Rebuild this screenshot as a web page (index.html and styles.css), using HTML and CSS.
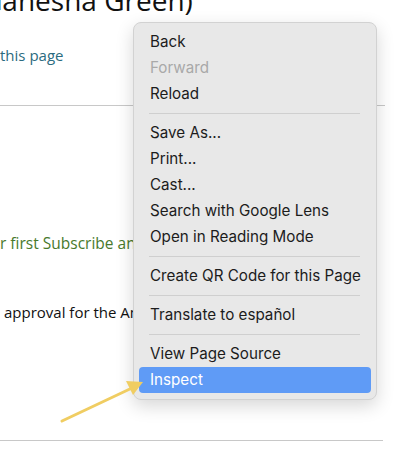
FILE: index.html
```html
<!DOCTYPE html>
<html lang="en">

<head>
    <meta charset="UTF-8">
    <meta name="viewport" content="width=device-width, initial-scale=1.0">
    <title>Inspect</title>
    <link rel="stylesheet" href="styles.css">
</head>

<body>

    <!-- Page content behind the menu -->
    <div class="page">
        <h1 class="title">Ganesha Green)</h1>
        <a class="page-link" href="#">this page</a>
        <hr class="rule">
        <p class="promo">r first Subscribe and Save order</p>
        <p class="note">approval for the Amazon listing</p>
        <hr class="rule rule-bottom">
    </div>

    <!-- Right click menu -->
    <ul class="context-menu">
        <li class="item">Back</li>
        <li class="item disabled">Forward</li>
        <li class="item">Reload</li>
        <li class="sep"></li>
        <li class="item">Save As...</li>
        <li class="item">Print...</li>
        <li class="item">Cast...</li>
        <li class="item">Search with Google Lens</li>
        <li class="item">Open in Reading Mode</li>
        <li class="sep"></li>
        <li class="item">Create QR Code for this Page</li>
        <li class="sep"></li>
        <li class="item">Translate to español</li>
        <li class="sep"></li>
        <li class="item">View Page Source</li>
        <li class="item active">Inspect</li>
    </ul>

    <!-- Yellow pointer arrow -->
    <svg class="arrow" width="400" height="449" viewBox="0 0 400 449">
        <line x1="62" y1="421" x2="132" y2="388" stroke="#f0cd62" stroke-width="3" stroke-linecap="round" />
        <polygon points="143,382 126,381 133,395" fill="#f0cd62" />
    </svg>

</body>

</html>
```

FILE: styles.css
```css
/* Base */
body {
    margin: 0;
    width: 400px;
    height: 449px;
    overflow: hidden;
    position: relative;
    background: #ffffff;
    font-family: "Open Sans", "Noto Sans", sans-serif;
}

/* Page behind the menu */
.page {
    display: flex;
    flex-direction: column;
    align-items: flex-start;
}

.title {
    margin: -15px 0 0 -18px;
    font-size: 28px;
    line-height: 30px;
    font-weight: 400;
    color: #111111;
    white-space: nowrap;
}

.page-link {
    margin-top: 29px;
    font-size: 15px;
    line-height: 22px;
    color: #2b6b80;
    text-decoration: none;
}

.rule {
    width: 385px;
    margin: 39px 0 0;
    border: none;
    border-top: 1px solid #c8c8c8;
}

.promo {
    margin: 126px 0 0;
    font-size: 15.5px;
    line-height: 22px;
    color: #48792c;
    white-space: nowrap;
}

.note {
    margin: 47px 0 0 4px;
    font-size: 15px;
    line-height: 22px;
    color: #111111;
    white-space: nowrap;
}

.rule-bottom {
    width: 383px;
    margin-top: 117px;
}

/* Context menu */
.context-menu {
    position: absolute;
    top: 22px;
    left: 133px;
    width: 242px;
    margin: 0;
    padding: 6px 0;
    list-style: none;
    background-color: #e8e8e8;
    border: 1px solid #d2d2d2;
    border-radius: 8px;
    box-shadow: 0 6px 18px rgba(0, 0, 0, 0.16);
    font-family: Inter, "Liberation Sans", sans-serif;
    font-size: 15.2px;
}

.item {
    height: 26px;
    line-height: 26px;
    margin: 0 5px;
    padding-left: 11px;
    border-radius: 4px;
    color: #1c1c1c;
    white-space: nowrap;
}

.item.disabled {
    color: #a9a9a9;
}

.item.active {
    background-color: #5f9bf6;
    color: #ffffff;
}

.sep {
    height: 1px;
    margin: 6px 16px 6px 15px;
    background-color: #cfcfcf;
}

/* Arrow overlay */
.arrow {
    position: absolute;
    top: 0;
    left: 0;
}
```
